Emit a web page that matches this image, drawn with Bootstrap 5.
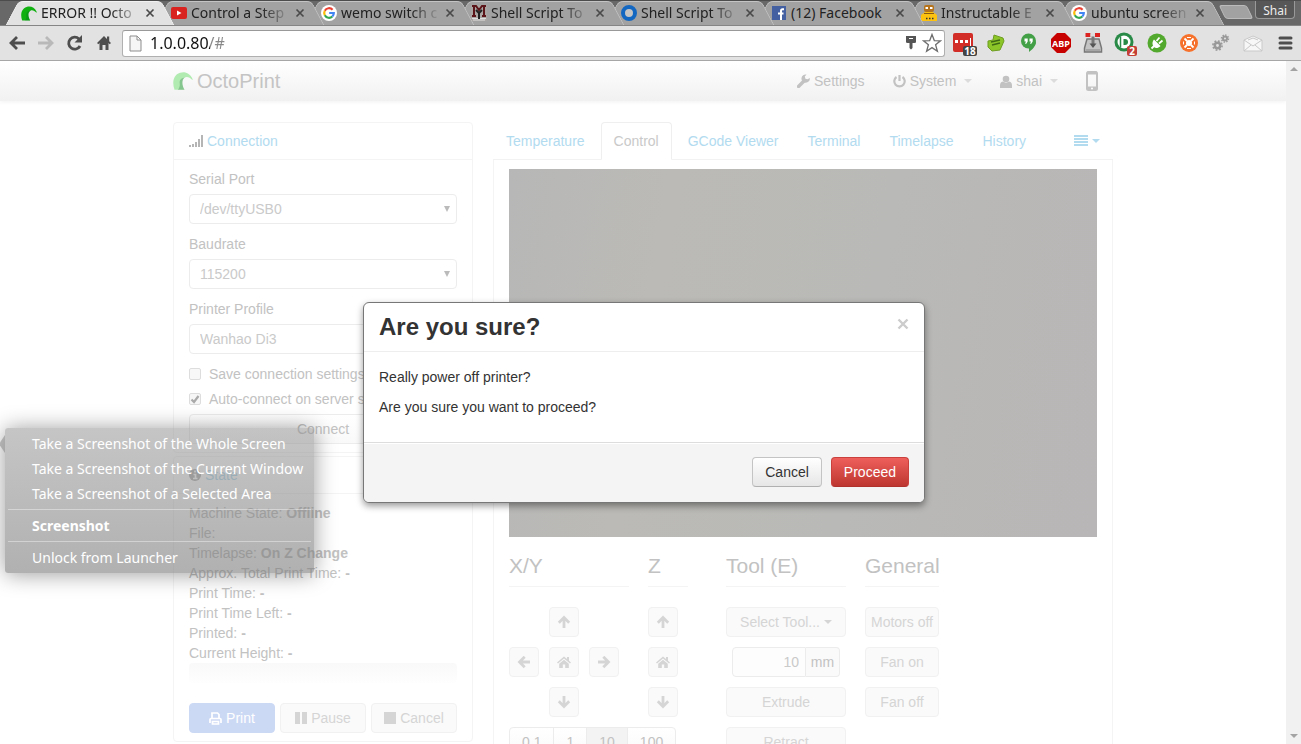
<!DOCTYPE html>
<html lang="en">
<head>
<meta charset="utf-8">
<meta name="viewport" content="width=device-width, initial-scale=1">
<title>OctoPrint</title>
<link href="https://cdn.jsdelivr.net/npm/bootstrap@5.3.0/dist/css/bootstrap.min.css" rel="stylesheet">
<style>
body{font:14px/20px "Liberation Sans",Arial,sans-serif;color:#c2c2c2;background:#fff}
a{text-decoration:none;color:#b2dbf0}
svg{display:block;flex:none}
.desk{font-family:"Noto Sans","Open Sans",sans-serif;color:#222}
/* browser tabs */
.tabstrip{height:25px;background:#686868;border-top:1px solid #4c4c4c;padding:0 6px 0 12px}
.btab{position:relative;flex:0 1 150px;min-width:0;height:24px;padding:0 7px 0 9px;isolation:isolate;font-size:14px;line-height:24px;color:#222}
.btab::before,.btab::after{content:"";position:absolute;z-index:-1;top:0;bottom:0;background:#a2a2a2;border-top:1px solid #c4c4c4}
.btab::before{left:0;right:30%;transform:skewX(-28deg);border-left:1px solid #c4c4c4;border-radius:5px 0 0 0}
.btab::after{left:30%;right:-6px;transform:skewX(28deg);border-right:1px solid #c4c4c4;border-radius:0 5px 0 0}
.btab.on::before,.btab.on::after{background:#e2e2e2;border-color:#f2f2f2}
.btab .cap{flex:1 1 0;min-width:0;overflow:hidden;white-space:nowrap;-webkit-mask-image:linear-gradient(90deg,#000 70%,transparent);mask-image:linear-gradient(90deg,#000 70%,transparent)}
.btab .whole{-webkit-mask-image:none;mask-image:none}
.btab button,.tool{border:0;background:none;padding:0;display:block}
.newtab{width:28px;height:14px;margin-left:10px;background:#a2a2a2;border:1px solid #bbb;border-radius:3px;transform:skewX(26deg)}
.who{height:18px;border:1px solid #999;border-top:0;border-radius:0 0 4px 4px;background:#575757;color:#eee;font-size:12px;line-height:20px;padding:0 7px}
.toolbar{height:36px;background:#e2e2e2;border-top:1px solid #858585;border-bottom:1px solid #a6a6a6}
.omni{height:27px;background:#fff;border:1px solid #b0b0b0;border-top-color:#999;border-radius:3px;padding:0 2px 0 6px}
.omni input{border:0;outline:0;flex:1;min-width:0;padding:0;font-size:16px;line-height:24px;color:transparent;background:linear-gradient(90deg,#111 60px,#888 60px);-webkit-background-clip:text;background-clip:text}
/* application */
.viewport{min-height:0}
.page{min-width:0;overflow:hidden}
.bar{width:15px;background:#f1f1f1}
.app{max-width:940px}
.columns{gap:20px;padding-top:21px}
.appbar{height:40px;background:linear-gradient(#fff,#f1f1f1);box-shadow:0 1px 4px rgba(0,0,0,.06)}
.appbar a{color:#c2c2c2}
.appbar nav{padding-right:15px}
.appbar .brandname{font-size:20px;color:#c4c4c4}
.side{flex:0 0 300px}
.box{border:1px solid #f4f4f4;border-radius:4px}
.box+.box{margin-top:3px}
.boxhead{height:37px;padding:8px 15px;border-bottom:1px solid #f4f4f4}
.boxbody{padding:9px 15px 8px}
.boxbody>label{display:block;margin-bottom:5px}
.pick{appearance:none;width:100%;height:30px;border:1px solid #ececec;border-radius:4px;padding:0 10px;margin-bottom:10px;color:#cacaca;display:block;line-height:20px;background:#fff url("data:image/svg+xml,%3Csvg xmlns='http://www.w3.org/2000/svg' width='6' height='6'%3E%3Cpath d='M0 0h6L3 6z' fill='%23bbb'/%3E%3C/svg%3E") no-repeat right 6px center}
.tickrow{height:20px;margin-bottom:5px;white-space:nowrap;overflow:hidden}
.tick{appearance:none;width:12px;height:12px;border:1px solid #ddd;border-radius:2px;background:#f8f8f8;margin:0;flex:none}
.tick:checked{background:#f6f6f6 url("data:image/svg+xml,%3Csvg xmlns='http://www.w3.org/2000/svg' viewBox='0 0 10 10'%3E%3Cpath d='M1.500 5.500l2.500 2.500 4.500-6' fill='none' stroke='%23aaa' stroke-width='2.200'/%3E%3C/svg%3E") center}
.b{height:30px;border:1px solid #f1f1f1;border-radius:4px;background:#fafafa;color:#d5d5d5;padding:0;line-height:20px;font-size:14px;white-space:nowrap;display:flex;align-items:center;justify-content:center}
.b-live{color:#c2c2c2;border-color:#ececec;background:linear-gradient(#fff,#f9f9f9)}
.b-print{background:#ccd9f5;border-color:#ccd9f5;color:#fff}
.sq{width:30px}
.meter{height:20px;margin-bottom:20px;border-radius:4px;background:linear-gradient(#f9f9f9,#fefefe)}
.trio{gap:5px}
.apptabs{height:38px;border-bottom:1px solid #f2f2f2;gap:3px}
.apptabs a{height:38px;padding:9px 13px;border-radius:4px 4px 0 0}
.apptabs a.on{color:#c9c9c9;border:1px solid #efefef;border-bottom-color:#fff;background:#fff;padding:8px 12px}
.pane{border:1px solid #f4f4f4;border-top:0;padding:9px 15px 20px}
.cam{height:368px;margin-bottom:9px;background:linear-gradient(100deg,#b7b7b7,#bbbab6 25%,#b9b9b7 60%,#b8b6b6)}
.jog h2{font-size:21px;line-height:40px;font-weight:400;margin:0 0 20px;border-bottom:1px solid #f4f4f4;white-space:nowrap}
.w120{width:120px}.w74{width:74px}.w40{width:40px}
.gapz{margin-left:19px}.gapt{margin-left:38px}
.pad{display:grid;grid-template-columns:repeat(3,30px);gap:10px;margin-bottom:10px}
.stack{display:grid;gap:10px}
.steps .b{border-radius:0;margin-right:-1px;padding:0 12px}
.steps .b:first-child{border-radius:4px 0 0 4px}
.steps .b:last-child{border-radius:0 4px 4px 0}
.steps .chosen{background:#f3f3f3}
.amt{width:74px;height:30px;border:1px solid #ececec;border-radius:4px 0 0 4px;padding:0 6px;text-align:right;color:#cacaca;background:#fdfdfd;appearance:textfield}
.amt::-webkit-inner-spin-button{appearance:none;margin:0}
.unit{width:34px;height:30px;border:1px solid #ececec;border-left:0;border-radius:0 4px 4px 0;background:#fafafa;text-align:center;line-height:28px}
/* dialog */
.dlglayer{position:absolute;inset:0 13px 0 0;z-index:10;pointer-events:none}
.dlg{width:562px;background:#fff;border:1px solid #777;border-radius:6px;box-shadow:0 3px 7px rgba(0,0,0,.4);color:#333;pointer-events:auto;overflow:hidden}
.dlghead{padding:9px 15px;border-bottom:1px solid #eee}
.dlghead h1{font-size:24px;line-height:30px;font-weight:700;margin:0}
.dlghead .tool{height:24px}
.dlgbody{padding:15px}
.dlgbody p{margin:0 0 10px}
.dlgfoot{padding:14px 15px 15px;background:#f4f4f4;border-top:1px solid #ddd;box-shadow:inset 0 1px #fff;gap:9px}
.dlgfoot button{height:30px;border-radius:4px;border:1px solid #c4c4c4;border-bottom-color:#b0b0b0;background:linear-gradient(#fff,#e6e6e6);padding:0 12px;color:#333;line-height:20px}
.dlgfoot .go{color:#fff;border-color:#c9403c #c9403c #b0302c;background:linear-gradient(#ee5f5b,#bd362f)}
/* launcher menu */
.launch{position:absolute;left:5px;top:428px;z-index:20;width:309px;padding:3px;border-radius:3px;background:linear-gradient(rgba(140,140,140,.5),rgba(120,120,120,.58));box-shadow:0 1px 22px rgba(0,0,0,.4);color:#fff}
.launch::before{content:"";position:absolute;left:-6px;top:7px;border:solid transparent;border-width:9px 6px 9px 0;border-right-color:rgba(130,130,130,.5)}
.launch button{display:block;width:100%;border:0;background:none;color:#fff;text-align:left;white-space:nowrap;padding:0 0 0 24px;height:25px;font-size:14px;line-height:25px}
.launch hr{margin:3px 0;border-top:1px solid #fff;opacity:.4}
</style>
</head>
<body>
<svg width="0" height="0" class="position-absolute" aria-hidden="true">
<defs>
<symbol id="x" viewBox="0 0 10 10"><path d="M1.500 1.500l7 7m0-7l-7 7" stroke="#4a4a4a" stroke-width="1.700"/></symbol>
<symbol id="g" viewBox="0 0 16 16"><circle cx="8" cy="8" r="8" fill="#fff"/><g fill="none" stroke-width="2.200"><path d="M11.600 4.800A4.800 4.800 0 0 0 3.800 5.700" stroke="#ea4335"/><path d="M3.800 5.700a4.800 4.800 0 0 0 0 4.600" stroke="#fbbc05"/><path d="M3.800 10.300a4.800 4.800 0 0 0 7.500 1.200" stroke="#34a853"/><path d="M11.300 11.500A4.800 4.800 0 0 0 12.800 8H8.200" stroke="#4285f4"/></g></symbol>
<symbol id="octo" viewBox="0 0 20 18"><path d="M1.500 17.800C-1 11 0 3 7 .8c5-1.600 10 .4 12.700 6.400l-.4.800C17 5.500 14 4.200 11.800 5.500c-3.600 2.200-3 7.500-.3 12.300z" fill="currentColor"/><path d="M11.800 5.500C6.500 6.500 6.500 9 6.800 12c.2 2.500-.8 4.500-2 5.800h6.700C9 13.500 8.500 8 11.800 5.500z" fill="#052" opacity=".25"/></symbol>
<symbol id="home" viewBox="0 0 14 12"><path d="M7 .5L0 6.500l1 1.100L7 2.600l6 5 1-1.100-2-1.700V1h-2v2zM7 3.700L2.200 7.700V12H5.800V8.500h2.400V12h3.600V7.700z" fill="currentColor"/></symbol>
<symbol id="arrow" viewBox="0 0 14 14"><path d="M7 13V3M1.800 7.700L7 2.500l5.200 5.200" fill="none" stroke="currentColor" stroke-width="2.800"/></symbol>
<symbol id="caret" viewBox="0 0 8 4"><path d="M0 0h8L4 4z" fill="currentColor"/></symbol>
</defs>
</svg>
<div class="vh-100 d-flex flex-column overflow-hidden position-relative">
<header class="desk">
<div class="tabstrip d-flex">
<div class="btab on d-flex align-items-center gap-1" style="z-index:9"><svg width="16" height="15" color="#10b010"><use href="#octo"/></svg><span class="cap">ERROR !! Octo</span><button aria-label="Close tab"><svg width="10" height="10"><use href="#x"/></svg></button></div>
<div class="btab d-flex align-items-center gap-1" style="z-index:8"><svg width="16" height="12"><rect width="16" height="12" rx="2" fill="#d8231f"/><path d="M6 3.500v5L10.500 6z" fill="#fff"/></svg><span class="cap">Control a Step</span><button aria-label="Close tab"><svg width="10" height="10"><use href="#x"/></svg></button></div>
<div class="btab d-flex align-items-center gap-1" style="z-index:7"><svg width="16" height="16"><use href="#g"/></svg><span class="cap">wemo switch c</span><button aria-label="Close tab"><svg width="10" height="10"><use href="#x"/></svg></button></div>
<div class="btab d-flex align-items-center gap-1" style="z-index:6"><svg width="16" height="16"><rect width="16" height="16" fill="#a9a6a3"/><path d="M1 13.500h14M2 15h12" stroke="#ddd"/><path d="M3 1v10M13 1v10M1 1h4l3 4 3-4h4M1 11h4M11 11h4" fill="none" stroke="#5c1518" stroke-width="2"/><path d="M5 5l3 3 3-3M8 7v7" fill="none" stroke="#222" stroke-width="2"/></svg><span class="cap">Shell Script To</span><button aria-label="Close tab"><svg width="10" height="10"><use href="#x"/></svg></button></div>
<div class="btab d-flex align-items-center gap-1" style="z-index:5"><svg width="16" height="16"><circle cx="8" cy="8" r="6" fill="#c4c4c4" stroke="#1467c0" stroke-width="4"/></svg><span class="cap">Shell Script To</span><button aria-label="Close tab"><svg width="10" height="10"><use href="#x"/></svg></button></div>
<div class="btab d-flex align-items-center gap-1" style="z-index:4"><svg width="16" height="16"><rect x="1" y="1" width="14" height="14" fill="#4460a0"/><path d="M13 4.200h-1.500c-1 0-1.500.5-1.500 1.500V15M7 8.500h5.500" fill="none" stroke="#fff" stroke-width="2"/></svg><span class="cap whole">(12) Facebook</span><button aria-label="Close tab"><svg width="10" height="10"><use href="#x"/></svg></button></div>
<div class="btab d-flex align-items-center gap-1" style="z-index:3"><svg width="16" height="16"><rect x="3" y="0" width="10" height="7" rx="2" fill="#b5741b"/><path d="M4.500 3h2.500M9 3h2.500" stroke="#fff" stroke-width="2"/><path d="M0 10l4-3h8l4 3v6H0z" fill="#fdc210"/><path d="M3 8.500h10" stroke="#8a5a12"/><path d="M5 13.500h1.500M8 13.500h1.500M11 13.500h1.500" stroke="#333" stroke-width="1.500"/></svg><span class="cap">Instructable E</span><button aria-label="Close tab"><svg width="10" height="10"><use href="#x"/></svg></button></div>
<div class="btab d-flex align-items-center gap-1" style="z-index:2"><svg width="16" height="16"><use href="#g"/></svg><span class="cap">ubuntu screen</span><button aria-label="Close tab"><svg width="10" height="10"><use href="#x"/></svg></button></div>
<button class="newtab mt-1 p-0" aria-label="New tab"></button>
<button class="who ms-auto">Shai</button>
</div>
<div class="toolbar d-flex align-items-center pe-1">
<nav class="d-flex align-items-center ps-2 me-2 gap-2" aria-label="Navigation">
<button class="tool" aria-label="Back"><svg width="20" height="18"><path d="M17 9H4M9 3L3 9l6 6" fill="none" stroke="#4e4e4e" stroke-width="2.800"/></svg></button>
<button class="tool" aria-label="Forward"><svg width="20" height="18"><path d="M2 9h13M10 3l6 6-6 6" fill="none" stroke="#b9b9b9" stroke-width="2.800"/></svg></button>
<button class="tool" aria-label="Reload"><svg width="22" height="18"><path d="M16 12A6 6 0 1 1 15 5" fill="none" stroke="#4e4e4e" stroke-width="2.800"/><path d="M18 1v7.500h-7.500z" fill="#4e4e4e"/></svg></button>
<button class="tool" aria-label="Home"><svg width="20" height="18" viewBox="0 0 20 18"><path d="M10 2l-7 7 1.300 1.200L5.500 9v7H8.500v-5h3v5h3V9l1.200 1.200L17 9l-1.800-1.800V2.500H13V5z" fill="#4e4e4e"/></svg></button>
</nav>
<div class="omni d-flex align-items-center flex-fill me-2">
<svg class="me-2" width="13" height="17"><path d="M1 1h7l4 4v11H1zM8 1v4h4" fill="#f6f6f6" stroke="#8d8d8d"/></svg>
<input type="text" aria-label="Address" value="1.0.0.80/#">
<svg class="me-1" width="14" height="16"><path d="M2 1h10v6.500L10.500 8H8.500v5L7 14.500 5.500 13V8h-2L2 7.500z" fill="#555"/><path d="M5 3.500h4" stroke="#fff"/></svg>
<svg width="20" height="20"><path d="M10 1.500l2.300 6.100 6.200.2-4.900 4 1.800 6.400L10 14.600l-5.400 3.600 1.800-6.400-4.900-4 6.200-.2z" fill="#fff" stroke="#6e6e6e" stroke-width="1.300"/></svg>
</div>
<div class="d-flex align-items-center gap-2">
<svg width="24" height="26"><rect x="0" y="3" width="20" height="19" rx="2" fill="#d32d27"/><path d="M2 11.500h3M7 11.500h3M12 11.500h3" stroke="#fff" stroke-width="3"/><path d="M17.500 8v8" stroke="#fff"/><rect x="10" y="16" width="14" height="10" rx="2" fill="#444"/><text x="17" y="24.500" font-size="10" font-weight="700" fill="#fff" text-anchor="middle">18</text></svg>
<svg width="24" height="24"><path d="M9 4l9 3 1 3-4 9-8 1-4-4 0-6 5-1z" fill="#8bc528" stroke="#6f9d22"/><path d="M6 11l9-2M7 14l8-2" stroke="#3e6a14" stroke-width="1.500"/></svg>
<svg width="24" height="24"><path d="M19 10.500c0 5-4 8-7 10.500v-5z" fill="#43a047"/><circle cx="11.500" cy="10" r="7.500" fill="#43a047"/><path d="M7.500 7.500h3.200v3l-1.400 2.200H8l1-2.200H7.500zM12.500 7.500h3.200v3l-1.400 2.200H13l1-2.200h-1.500z" fill="#fff"/></svg>
<svg width="24" height="24"><path d="M8 2h8l6 6v8l-6 6H8l-6-6V8z" fill="#c70000"/><text x="12" y="16" font-size="9" font-weight="700" fill="#fff" text-anchor="middle">ABP</text></svg>
<svg width="24" height="24"><path d="M6 8h12l2.500 9v4h-17v-4z" fill="#c4c4c4" stroke="#777" stroke-width="1.500"/><path d="M12 5v9" stroke="#777" stroke-width="3"/><path d="M8.500 12.500h7L12 17z" fill="#555"/><path d="M5 19h14" stroke="#888"/><path d="M4.500 4h5M14 4h5" stroke="#d22" stroke-width="4"/><path d="M9.500 4H14" stroke="#ddd" stroke-width="3"/></svg>
<svg width="24" height="26"><circle cx="11" cy="12" r="9.500" fill="#288a46"/><circle cx="11" cy="12" r="6.500" fill="#fff"/><path d="M7.500 6.500v11" stroke="#288a46" stroke-width="1.500"/><path d="M10.500 9h1.500a3 3 0 0 1 0 6h-1.500z" fill="#288a46"/><rect x="14" y="16" width="10" height="10" rx="2" fill="#c44036"/><text x="19" y="24.500" font-size="10" font-weight="700" fill="#fff" text-anchor="middle">2</text></svg>
<svg width="24" height="24"><circle cx="12" cy="12" r="9.500" fill="#52a92e"/><path d="M9 8.500l6.500 6.500c-2.500 2.500-5 2.500-6.500 1s-2.500-4.500 0-7.500z" fill="#fff"/><path d="M6.500 17.500l3-3M11.500 10l3-3.500M14 12.500l3.500-3" stroke="#fff" stroke-width="1.800"/></svg>
<svg width="24" height="24"><circle cx="12" cy="12" r="9" fill="#f6712b"/><circle cx="12" cy="12" r="3" fill="#fff"/><path d="M7.500 7.500l2.500 2.500M16.500 7.500L14 10M7.500 16.500L10 14M16.500 16.500L14 14" stroke="#fff" stroke-width="1.800"/><path d="M10 6.500h4M10 17.500h4M6.500 10.500v3M17.500 10.500v3" stroke="#fff"/></svg>
<svg width="24" height="24"><g fill="none" stroke="#999"><circle cx="8.500" cy="14.500" r="2.700" stroke-width="2.500"/><circle cx="8.500" cy="14.500" r="4.600" stroke-width="1.600" stroke-dasharray="1.800 1.800"/><circle cx="16" cy="7.500" r="2" stroke-width="2"/><circle cx="16" cy="7.500" r="3.500" stroke-width="1.500" stroke-dasharray="1.400 1.300"/></g></svg>
<svg width="24" height="24"><path d="M3 9l9-4 9 4v11H3z" fill="#f7f7f7" stroke="#c9c9c9"/><path d="M3 9l9 6 9-6M3 20l7-6M21 20l-7-6M7 9l5-2 5 2" fill="none" stroke="#c8c8c8"/></svg>
<button class="tool ms-1" aria-label="Menu"><svg width="20" height="18"><path d="M3 4h11M3 9h11M3 14h11" stroke="#4e4e4e" stroke-width="3" stroke-linecap="round"/></svg></button>
</div>
</div>
</header>
<div class="viewport flex-fill d-flex position-relative">
<div class="page flex-fill">
<div class="appbar">
<div class="app h-100 mx-auto d-flex align-items-center">
<a href="#" class="brandname d-flex align-items-center gap-1"><svg width="20" height="18" color="#b2ebb2"><use href="#octo"/></svg>OctoPrint</a>
<nav class="ms-auto d-flex align-items-center">
<a href="#" class="d-flex align-items-center gap-1 me-4 pe-1"><svg width="13" height="14" viewBox="0 0 13 14"><path d="M1.500 12.500L7.500 6.500" stroke="currentColor" stroke-width="3.400" stroke-linecap="round"/><path d="M12.800 4A4.200 4.200 0 1 1 9.500.5L7.800 2.600l.6 2.200 2.200.5z" fill="currentColor"/></svg>Settings</a>
<a href="#" class="d-flex align-items-center gap-1 me-4 pe-1"><svg width="13" height="14"><path d="M3.500 3a5.200 5.200 0 1 0 6 0M6.500 1v6" fill="none" stroke="currentColor" stroke-width="2.200"/></svg>System<svg class="ms-1" width="8" height="4" color="#dcdcdc"><use href="#caret"/></svg></a>
<a href="#" class="d-flex align-items-center gap-1 me-4 pe-1"><svg width="12" height="13"><circle cx="6" cy="4" r="3.300" fill="currentColor"/><path d="M0 13V10C0 7.500 2 6.500 3 6.500c2 1.500 4 1.500 6 0 1 0 3 1 3 3.500v3z" fill="currentColor"/></svg>shai<svg class="ms-1" width="8" height="4" color="#dcdcdc"><use href="#caret"/></svg></a>
<a href="#" aria-label="Touch interface"><svg width="12" height="20"><rect x="1" y="1" width="10" height="18" rx="1.500" fill="none" stroke="currentColor" stroke-width="2"/><path d="M1 2h10M1 17h10" stroke="currentColor" stroke-width="3"/><circle cx="6" cy="17.500" r="1" fill="#fff"/></svg></a>
</nav>
</div>
</div>
<main class="app columns mx-auto d-flex align-items-start">
<div class="side">
<section class="box">
<div class="boxhead d-flex align-items-center gap-1"><svg width="14" height="12"><path d="M1 10v2M4 9v3M7 7v5M10 4v8M13 0v12" stroke="#b5b5b5" stroke-width="2"/></svg><a href="#">Connection</a></div>
<div class="boxbody">
<label for="port">Serial Port</label><select id="port" class="pick"><option>/dev/ttyUSB0</option></select>
<label for="baud">Baudrate</label><select id="baud" class="pick"><option>115200</option></select>
<label for="prof">Printer Profile</label><select id="prof" class="pick"><option>Wanhao Di3</option></select>
<div class="tickrow d-flex align-items-center gap-2"><input id="save" class="tick" type="checkbox"><label for="save">Save connection settings</label></div>
<div class="tickrow d-flex align-items-center gap-2"><input id="auto" class="tick" type="checkbox" checked><label for="auto">Auto-connect on server startup</label></div>
<button class="b b-live w-100">Connect</button>
</div>
</section>
<section class="box">
<div class="boxhead d-flex align-items-center gap-1"><svg width="12" height="12"><circle cx="6" cy="6" r="6" fill="#b3b3b3"/><path d="M6 1.500v2M4.500 5.500H6.500V9M4 9.500h4.500" fill="none" stroke="#fff" stroke-width="1.700"/></svg><a href="#">State</a></div>
<div class="boxbody">
<div>Machine State: <b>Offline</b></div>
<div>File:</div>
<div>Timelapse: <b>On Z Change</b></div>
<div>Approx. Total Print Time: <b>-</b></div>
<div>Print Time: <b>-</b></div>
<div>Print Time Left: <b>-</b></div>
<div>Printed: <b>-</b></div>
<div>Current Height: <b>-</b></div>
<div class="meter"></div>
<div class="trio d-flex">
<button class="b b-print flex-fill w-100 gap-1"><svg width="13" height="13"><path d="M3 6V1h5.500L10 2.500V6M1 11V7.500Q1 6.500 2 6.500h9q1 0 1 1V11M3.500 9.500h6V12h-6z" fill="none" stroke="#fff" stroke-width="1.700"/></svg>Print</button>
<button class="b flex-fill w-100 gap-1"><svg width="12" height="12"><path d="M2.500 0v12M9.500 0v12" stroke="currentColor" stroke-width="5"/></svg>Pause</button>
<button class="b flex-fill w-100 gap-1"><svg width="12" height="12"><rect width="12" height="12" fill="currentColor"/></svg>Cancel</button>
</div>
</div>
</section>
</div>
<div class="flex-fill">
<nav class="apptabs d-flex">
<a href="#">Temperature</a><a href="#" class="on">Control</a><a href="#">GCode Viewer</a><a href="#">Terminal</a><a href="#">Timelapse</a><a href="#">History</a>
<a href="#" class="ms-auto d-flex align-items-center gap-1" aria-label="More tabs"><svg width="14" height="12"><path d="M0 1h14M0 4h14M0 7h14M0 10h14" stroke="currentColor" stroke-width="2"/></svg><svg width="8" height="4"><use href="#caret"/></svg></a>
</nav>
<div class="pane">
<div class="cam" role="img" aria-label="Webcam stream"></div>
<div class="jog d-flex">
<div class="w120"><h2>X/Y</h2>
<div class="pad">
<span></span><button class="b sq" aria-label="Y up"><svg width="14" height="14"><use href="#arrow"/></svg></button><span></span>
<button class="b sq" aria-label="X left"><svg width="14" height="14" viewBox="0 0 14 14"><use href="#arrow" width="14" height="14" transform="rotate(-90 7 7)"/></svg></button><button class="b sq" aria-label="Home X/Y"><svg width="14" height="12"><use href="#home"/></svg></button><button class="b sq" aria-label="X right"><svg width="14" height="14" viewBox="0 0 14 14"><use href="#arrow" width="14" height="14" transform="rotate(90 7 7)"/></svg></button>
<span></span><button class="b sq" aria-label="Y down"><svg width="14" height="14" viewBox="0 0 14 14"><use href="#arrow" width="14" height="14" transform="rotate(180 7 7)"/></svg></button>
</div>
<div class="steps d-flex"><button class="b b-live">0.1</button><button class="b b-live">1</button><button class="b b-live chosen">10</button><button class="b b-live">100</button></div>
</div>
<div class="w40 gapz"><h2>Z</h2><div class="stack">
<button class="b sq" aria-label="Z up"><svg width="14" height="14"><use href="#arrow"/></svg></button><button class="b sq" aria-label="Home Z"><svg width="14" height="12"><use href="#home"/></svg></button><button class="b sq" aria-label="Z down"><svg width="14" height="14" viewBox="0 0 14 14"><use href="#arrow" width="14" height="14" transform="rotate(180 7 7)"/></svg></button></div></div>
<div class="w120 gapt"><h2>Tool (E)</h2><div class="stack">
<button class="b gap-1">Select Tool...<svg width="8" height="4"><use href="#caret"/></svg></button>
<div class="d-flex justify-content-center"><input class="amt" type="number" value="10" aria-label="Amount in mm"><span class="unit">mm</span></div>
<button class="b">Extrude</button><button class="b">Retract</button></div></div>
<div class="w74 gapz"><h2>General</h2><div class="stack"><button class="b">Motors off</button><button class="b">Fan on</button><button class="b">Fan off</button></div></div>
</div>
</div>
</div>
</main>
</div>
<div class="bar d-flex flex-column justify-content-between align-items-center py-1"><svg width="8" height="8"><path d="M0 6l4-4 4 4z" fill="#a3a3a3"/></svg><svg width="8" height="8"><path d="M0 2l4 4 4-4z" fill="#a3a3a3"/></svg></div>
<div class="dlglayer d-flex align-items-center justify-content-center">
<div class="dlg" role="dialog" aria-labelledby="dt">
<div class="dlghead d-flex justify-content-between align-items-start"><h1 id="dt">Are you sure?</h1><button class="tool d-flex align-items-center" aria-label="Close"><svg width="12" height="12" viewBox="0 0 12 12"><path d="M1.500 1.500l9 9m0-9l-9 9" stroke="#ccc" stroke-width="2.400"/></svg></button></div>
<div class="dlgbody"><p>Really power off printer?</p><p>Are you sure you want to proceed?</p></div>
<div class="dlgfoot d-flex justify-content-end"><button>Cancel</button><button class="go">Proceed</button></div>
</div>
</div>
</div>
<div class="launch desk" role="menu">
<button role="menuitem">Take a Screenshot of the Whole Screen</button>
<button role="menuitem">Take a Screenshot of the Current Window</button>
<button role="menuitem">Take a Screenshot of a Selected Area</button>
<hr><button role="menuitem"><b>Screenshot</b></button>
<hr><button role="menuitem">Unlock from Launcher</button>
</div>
</div>
<script src="https://cdn.jsdelivr.net/npm/bootstrap@5.3.0/dist/js/bootstrap.bundle.min.js"></script>
</body>
</html>
